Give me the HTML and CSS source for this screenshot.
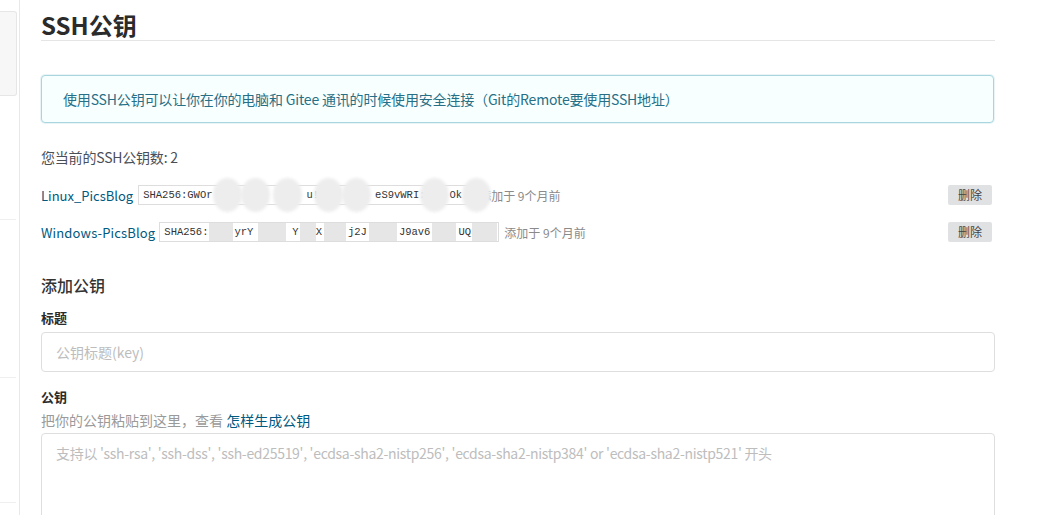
FILE: index.html
```html
<!DOCTYPE html>
<html lang="zh-CN">
<head>
<meta charset="utf-8">
<title>SSH公钥</title>
<link rel="stylesheet" href="styles.css">
</head>
<body>
<div class="layout">
  <aside class="sidebar">
    <div class="side-card"></div>
    <div class="side-item side-item-1"></div>
    <div class="side-item side-item-2"></div>
    <div class="side-item side-item-3"></div>
  </aside>
  <div class="rail"></div>
  <main class="main">
    <h1 class="title">SSH公钥</h1>
    <div class="info">使用SSH公钥可以让你在你的电脑和 Gitee 通讯的时候使用安全连接（Git的Remote要使用SSH地址）</div>
    <div class="count">您当前的SSH公钥数: 2</div>

    <div class="key-row">
      <a class="key-name" href="#">Linux_PicsBlog</a>
      <div class="key-box">
        <span class="t0">SHA256:GWOr</span><span class="blob b1"></span><span class="blob b2"></span><span class="blob b3"></span><span class="t1">u!</span><span class="blob b4"></span><span class="blob b5"></span><span class="t2">eS9vWRI:</span><span class="blob b6"></span><span class="t3">Ok</span>
      </div>
      <span class="blob b7"></span>
      <span class="key-time key-time-1">添加于 9个月前</span>
      <button class="del-btn" type="button">删除</button>
    </div>

    <div class="key-row key-row-2">
      <a class="key-name key-name-2" href="#">Windows-PicsBlog</a>
      <div class="key-box key-box-2">
        <span>SHA256:</span><span class="mask m1"></span><span>yrY</span><span class="mask m2"></span><span>Y</span><span class="mask m3"></span><span>X</span><span class="mask m4"></span><span>j2J</span><span class="mask m5"></span><span>J9av6</span><span class="mask m6"></span><span>UQ</span><span class="mask m7"></span>
      </div>
      <span class="key-time">添加于 9个月前</span>
      <button class="del-btn" type="button">删除</button>
    </div>

    <h3 class="add-title">添加公钥</h3>
    <label class="field-label" for="key-title">标题</label>
    <input id="key-title" class="field-input" type="text" placeholder="公钥标题(key)">
    <label class="field-label field-label-2" for="key-body">公钥</label>
    <div class="help">把你的公钥粘贴到这里，查看 <a href="#">怎样生成公钥</a></div>
    <textarea id="key-body" class="field-area" placeholder="支持以 'ssh-rsa', 'ssh-dss', 'ssh-ed25519', 'ecdsa-sha2-nistp256', 'ecdsa-sha2-nistp384' or 'ecdsa-sha2-nistp521' 开头"></textarea>
  </main>
</div>
</body>
</html>
```

FILE: styles.css
```css
* { box-sizing: border-box; }

html, body {
  margin: 0;
  padding: 0;
  background: #ffffff;
  height: 515px;
  overflow: hidden;
}

body {
  font-family: "Noto Sans CJK SC", "Noto Sans", sans-serif;
  font-size: 14px;
  color: #333333;
}

.layout {
  display: flex;
  align-items: stretch;
  min-height: 515px;
}

.sidebar {
  width: 17px;
  flex: none;
  display: flex;
  flex-direction: column;
}

.side-card {
  margin-top: 11px;
  height: 85px;
  background: #f7f7f7;
  border: 1px solid #e6e6e6;
  border-left: none;
  border-radius: 0 3px 3px 0;
}

.side-item {
  width: 16px;
  border-bottom: 1px solid #efefef;
}
.side-item-1 { height: 124px; }
.side-item-2 { height: 158px; }
.side-item-3 { height: 125px; }

.rail {
  width: 1px;
  flex: none;
  margin-left: 2px;
  background: #e8e8e8;
}

.main {
  margin-left: 21px;
  width: 954px;
  flex: none;
  display: flex;
  flex-direction: column;
}

.title {
  margin: 0;
  padding-top: 9px;
  font-size: 24px;
  line-height: 31px;
  font-weight: 700;
  color: #2b2b2b;
  border-bottom: 1px solid #e5e5e5;
}

.info {
  margin-top: 34px;
  height: 48px;
  width: 953px;
  padding: 0 21px;
  line-height: 46px;
  font-size: 14px;
  letter-spacing: -0.17px;
  color: #276f86;
  background: #f8ffff;
  border: 1px solid #a9d5de;
  border-radius: 4px;
  box-shadow: 0 0 0 1px rgba(169, 213, 222, 0.25);
}

.count {
  margin-top: 24px;
  line-height: 20px;
  font-size: 14px;
  letter-spacing: -0.2px;
  color: #4a4f58;
}

.key-row {
  margin-top: 18px;
  height: 20px;
  display: flex;
  align-items: center;
}
.key-row-2 { margin-top: 17px; }

.key-name {
  font-size: 13px;
  color: #005980;
  text-decoration: none;
  margin-right: 5px;
}
.key-name-2 {
  letter-spacing: 0.15px;
  margin-right: 4px;
}

.key-box {
  width: 340px;
  height: 20px;
  flex: none;
  display: flex;
  align-items: center;
  padding-left: 4px;
  border: 1px solid #dddddd;
  background: #ffffff;
  font-family: "Liberation Mono", monospace;
  font-size: 10.5px;
  color: #333333;
  white-space: nowrap;
}

.blob {
  display: inline-block;
  flex: none;
  width: 29px;
  height: 34px;
  border-radius: 50%;
  background: #ededed;
  filter: blur(1.5px);
  position: relative;
  z-index: 1;
}
.b1 { margin-left: 1px; }
.b2 { margin-left: -1px; }
.b3 { margin-left: 3px; }
.t1 { margin-left: 4px; }
.b4 { margin-left: -5px; }
.b5 { margin-left: -1px; }
.t2 { margin-left: 4px; }
.b6 { margin-left: -6px; }
.t3 { margin-left: 1px; }
.b7 { margin-left: -16px; }

.key-box-2 { padding-left: 4px; }

.mask {
  display: inline-block;
  flex: none;
  height: 18px;
  background: #e6e6e6;
}
.m1 { width: 24px; margin: 0 1px 0 1px; }
.m2 { width: 28px; margin: 0 6px 0 5px; }
.m3 { width: 16px; margin: 0 0 0 1px; }
.m4 { width: 22px; margin: 0 2px 0 2px; }
.m5 { width: 28px; margin: 0 2px 0 2px; }
.m6 { width: 24px; margin: 0 2px 0 2px; }
.m7 { width: 25px; margin-left: 1px; }

.key-time {
  margin-left: 5px;
  font-size: 12px;
  color: #8a8a8a;
  position: relative;
  z-index: 0;
}
.key-time-1 { margin-left: -12px; }

.del-btn {
  margin-left: auto;
  margin-right: 3px;
  width: 44px;
  height: 20px;
  padding: 0;
  border: none;
  border-radius: 2px;
  background: #e0e1e2;
  color: #444444;
  font-family: "Noto Sans CJK SC", sans-serif;
  font-size: 12px;
  line-height: 20px;
}

.add-title {
  margin: 31px 0 0;
  font-size: 16px;
  line-height: 24px;
  font-weight: 500;
  color: #333333;
}

.field-label {
  margin-top: 11px;
  font-size: 13px;
  line-height: 20px;
  font-weight: 700;
  color: #2b2b2b;
}
.field-label-2 { margin-top: 15px; }

.field-input {
  margin-top: 4px;
  width: 954px;
  height: 40px;
  padding: 0 14px;
  border: 1px solid #dedede;
  border-radius: 4px;
  font-family: "Noto Sans CJK SC", sans-serif;
  font-size: 14px;
  color: #333333;
  outline: none;
}

.field-input::placeholder,
.field-area::placeholder {
  color: #bdbdbd;
}

.help {
  margin-top: 3px;
  line-height: 20px;
  font-size: 14px;
  color: #9a9a9a;
}
.help a {
  color: #005980;
  text-decoration: none;
}

.field-area {
  margin-top: 3px;
  width: 954px;
  height: 130px;
  padding: 9px 14px;
  border: 1px solid #dedede;
  border-radius: 4px;
  font-family: "Noto Sans CJK SC", sans-serif;
  font-size: 14px;
  letter-spacing: -0.3px;
  line-height: 20px;
  resize: none;
  outline: none;
}
```
